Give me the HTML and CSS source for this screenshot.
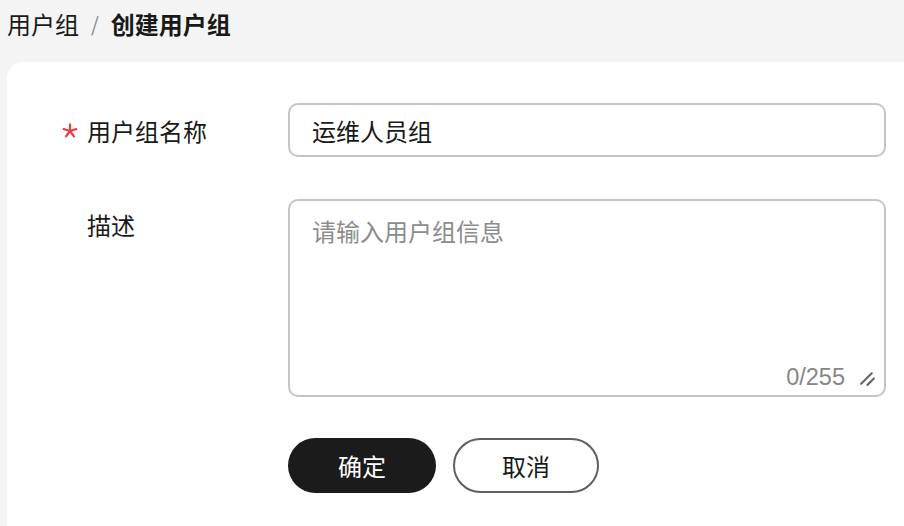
FILE: index.html
```html
<!DOCTYPE html>
<html lang="zh-CN">
<head>
<meta charset="utf-8">
<title>创建用户组</title>
<link rel="stylesheet" href="styles.css">
</head>
<body>
<nav class="breadcrumb">
  <span class="crumb">用户组</span>
  <span class="sep">/</span>
  <span class="crumb current">创建用户组</span>
</nav>
<main class="card">
  <form class="form">
    <div class="row">
      <label class="label">
        <svg class="star" width="16" height="16" viewBox="0 0 16 16" aria-hidden="true">
          <g stroke="#ee3a3f" stroke-width="2.2" stroke-linecap="butt">
            <line x1="8" y1="8" x2="8" y2="0.5"/>
            <line x1="8" y1="8" x2="15.2" y2="5.7"/>
            <line x1="8" y1="8" x2="12.5" y2="14.2"/>
            <line x1="8" y1="8" x2="3.5" y2="14.2"/>
            <line x1="8" y1="8" x2="0.8" y2="5.7"/>
          </g>
        </svg>
        <span>用户组名称</span>
      </label>
      <div class="control">
        <input class="input" type="text" value="运维人员组">
      </div>
    </div>
    <div class="row">
      <label class="label"><span>描述</span></label>
      <div class="control">
        <div class="textarea-wrap">
          <textarea class="textarea" placeholder="请输入用户组信息"></textarea>
          <span class="counter">0/255</span>
          <svg class="resize" width="17" height="17" viewBox="0 0 16 16" aria-hidden="true">
            <g stroke="#666" stroke-width="2" stroke-linecap="round">
              <line x1="2" y1="13" x2="12" y2="3"/>
              <line x1="8" y1="14" x2="14" y2="8"/>
            </g>
          </svg>
        </div>
      </div>
    </div>
    <div class="row actions">
      <div class="label"></div>
      <div class="control buttons">
        <button type="button" class="btn primary">确定</button>
        <button type="button" class="btn secondary">取消</button>
      </div>
    </div>
  </form>
</main>
</body>
</html>
```
FILE: styles.css
```css
* { box-sizing: border-box; }
html, body { margin: 0; padding: 0; }
body {
  background: #f4f4f4;
  font-family: "Noto Sans CJK SC", "Noto Sans", sans-serif;
  color: #191919;
  overflow: hidden;
  height: 526px;
}
.breadcrumb {
  height: 62px;
  padding: 5px 0 0 7px;
  display: flex;
  align-items: flex-start;
  font-size: 24px;
  line-height: 38px;
}
.crumb { color: #191919; }
.crumb.current { font-weight: 700; }
.sep {
  color: #8a8a8a;
  margin: 0 12px;
  font-size: 20px;
}
.card {
  background: #fff;
  margin-left: 7px;
  margin-right: -40px;
  border-radius: 16px 16px 0 0;
  height: 464px;
  padding: 41px 0 0 0;
}
.form { display: flex; flex-direction: column; gap: 42px; }
.row { display: flex; align-items: flex-start; }
.actions { margin-top: -1px; }
.label {
  width: 281px;
  flex: none;
  display: flex;
  align-items: center;
  height: 54px;
  padding-left: 80px;
  position: relative;
  font-size: 24px;
  color: #191919;
}
.row:nth-child(2) .label { height: 50px; }
.star { position: absolute; left: 55px; top: 20px; }
.control { width: 598px; flex: none; }
.input {
  width: 100%;
  height: 54px;
  border: 2px solid #c4c4c4;
  border-radius: 10px;
  padding: 0 22px;
  font-family: inherit;
  font-size: 24px;
  color: #191919;
  outline: none;
  background: #fff;
}
.textarea-wrap {
  position: relative;
  height: 198px;
  border: 2px solid #c4c4c4;
  border-radius: 10px;
  background: #fff;
}
.textarea {
  display: block;
  width: 100%;
  height: 100%;
  border: none;
  outline: none;
  resize: none;
  background: transparent;
  padding: 12px 22px;
  font-family: inherit;
  font-size: 24px;
  line-height: 36px;
  color: #191919;
}
.textarea::placeholder { color: #8c8c8c; }
.counter {
  position: absolute;
  right: 39px;
  bottom: 3px;
  font-family: "Liberation Sans", Arial, sans-serif;
  font-size: 23.5px;
  line-height: 30px;
  color: #868686;
}
.resize { position: absolute; right: 8px; bottom: 8px; }
.buttons { display: flex; gap: 17px; }
.btn {
  height: 55px;
  border-radius: 28px;
  font-family: inherit;
  font-size: 24px;
  padding: 0;
  cursor: pointer;
}
.btn.primary {
  width: 148px;
  background: #1b1b1b;
  color: #fff;
  border: none;
}
.btn.secondary {
  width: 146px;
  background: #fff;
  color: #191919;
  border: 2px solid #5f5f5f;
}
```
